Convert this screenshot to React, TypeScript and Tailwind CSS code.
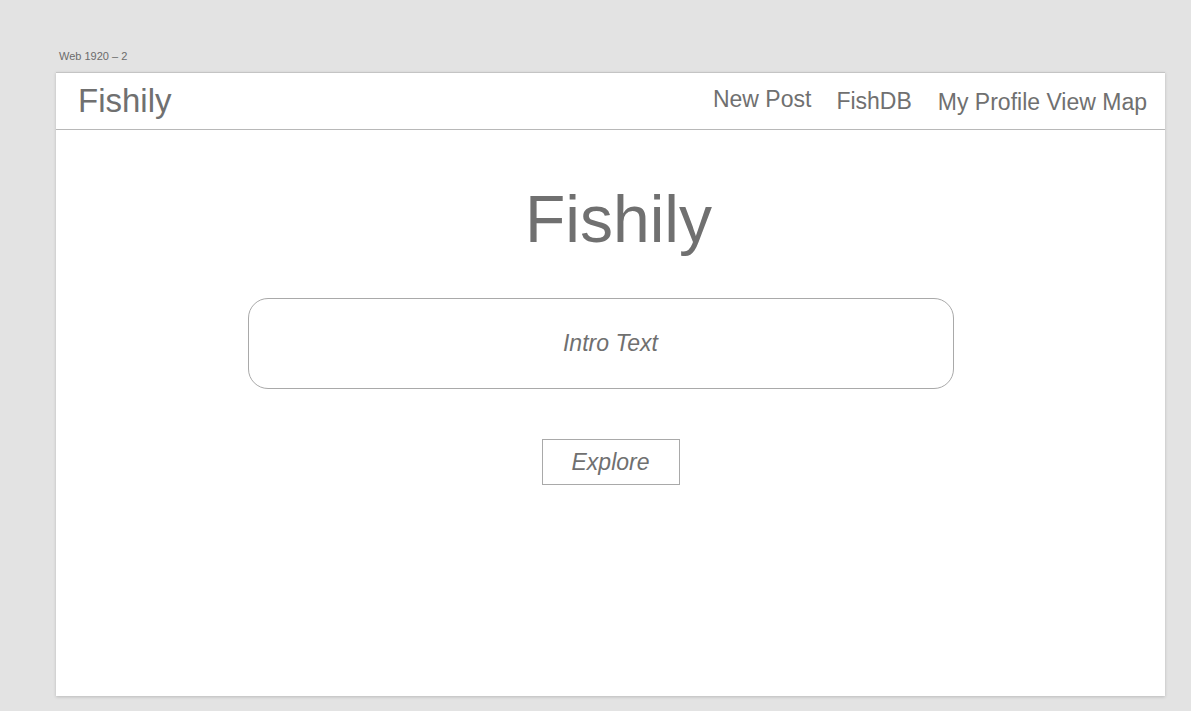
export default function App() {
  return (
    <div
      className="h-[711px] w-[1191px] bg-[#e3e3e3] pl-[56px] text-[#707070]"
      style={{ fontFamily: '"Liberation Sans", Arial, sans-serif' }}
    >
      <div className="h-[72px] pt-[50px] pl-[3px] text-[11px] leading-[13px] text-[#6b6b6b]">
        Web 1920 – 2
      </div>

      <div className="flex h-[624px] w-[1109px] flex-col bg-white shadow-[0_1px_3px_rgba(0,0,0,0.18)]">
        <header className="flex h-[58px] items-start border-t border-b border-[#c4c4c4] border-b-[#b8b8b8] pl-[22px] pr-[18px]">
          <span className="mt-[11px] text-[33px] leading-none">Fishily</span>
          <nav className="ml-auto flex items-start text-[23px] leading-none">
            <a className="mt-[15px]">New Post</a>
            <a className="ml-[25px] mt-[17px]">FishDB</a>
            <a className="ml-[26px] mt-[18px]">My Profile View Map</a>
          </nav>
        </header>

        <main className="flex flex-col">
          <h1 className="mt-[56px] self-center pl-[16px] text-[66px] leading-none">Fishily</h1>

          <div className="ml-[192px] mt-[46px] flex h-[91px] w-[706px] items-center justify-center rounded-[20px] border border-[#a9a9a9]">
            <span className="ml-[19px] text-[23px] italic leading-none">Intro Text</span>
          </div>

          <button className="mt-[50px] flex h-[46px] w-[138px] items-center justify-center self-center border border-[#a9a9a9] text-[23px] italic leading-none">
            Explore
          </button>
        </main>
      </div>
    </div>
  );
}
